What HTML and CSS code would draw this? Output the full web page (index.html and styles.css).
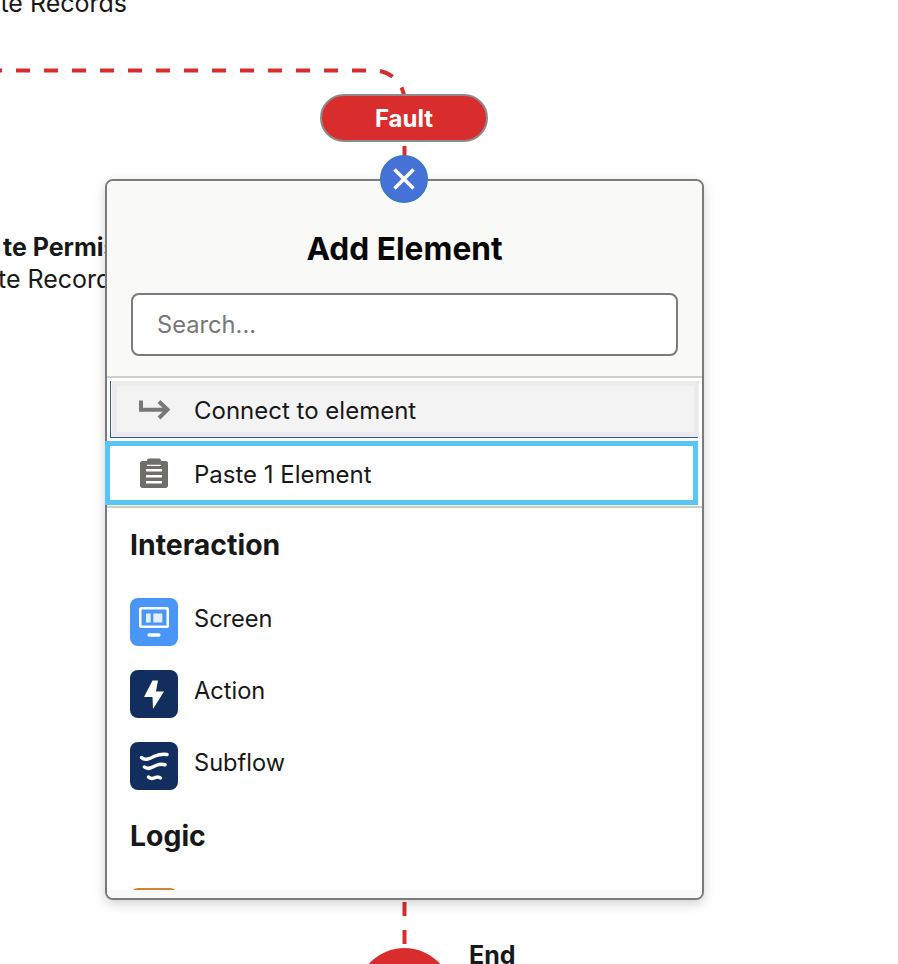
FILE: index.html
```html
<!DOCTYPE html>
<html lang="en">

<head>
    <meta charset="UTF-8">
    <meta name="viewport" content="width=device-width, initial-scale=1.0">
    <title>Add Element</title>
    <link rel="stylesheet" href="styles.css">
</head>

<body>
    <div class="canvas">
        <!-- connectors -->
        <svg class="wires" width="898" height="964" viewBox="0 0 898 964">
            <path class="wire" d="M-12 70.500H374A30 30 0 0 1 404.500 100"/>
            <path class="wire-solid" d="M404.500 146V156"/>
            <path class="wire" d="M404.500 902V948"/>
            <circle class="end-dot" cx="404.500" cy="996" r="48"/>
        </svg>

        <div class="node-text node-top">te Records</div>
        <div class="node-text node-mid"><b class="node-name">te Permissions</b>te Records</div>
        <div class="node-text node-end"><b>End</b></div>

        <div class="fault">Fault</div>

        <div class="panel">
            <div class="panel-head">
                <h2 class="panel-title">Add Element</h2>
                <div class="search">Search...</div>
            </div>

            <div class="quick">
                <div class="row-connect">
                    <div class="row-inner">
                        <span class="row-icon">
                            <svg width="32" height="24" viewBox="0 0 32 24">
                                <path class="arrow" d="M3 3.500V12.700H29M21 4.500L29.500 12.700L21 21"/>
                            </svg>
                        </span>
                        <span class="row-label">Connect to element</span>
                    </div>
                </div>
                <div class="row-paste">
                    <span class="row-icon">
                        <svg width="28" height="30" viewBox="0 0 28 30">
                            <path fill="#706e6b" d="M9 0.500H19C20.500 0.500 21 1.500 21 3H26C27 3 28 4 28 5V27.500C28 28.800 27 30 25.500 30H2.500C1 30 0 28.800 0 27.500V5C0 4 1 3 2 3H7C7 1.500 7.500 0.500 9 0.500Z"/>
                            <path fill="#fff" d="M6 11H22V13.500H6ZM6 17H22V19.500H6ZM6 23H22V25.500H6ZM7 6.800H21V8H7Z"/>
                        </svg>
                    </span>
                    <span class="row-label">Paste 1 Element</span>
                </div>
            </div>

            <div class="list">
                <h3 class="group-title">Interaction</h3>
                <div class="item">
                    <span class="tile tile-screen">
                        <svg width="48" height="48" viewBox="0 0 48 48">
                            <path fill="#fff" fill-rule="evenodd" d="M11 9H37C38 9 39 10 39 11V28C39 29 38 30 37 30H11C10 30 9 29 9 28V11C9 10 10 9 11 9ZM11.500 11.500V27.500H36.500V11.500Z"/>
                            <path fill="#e3efff" d="M16 15.500H20.700V24.500H16ZM23.300 15.500H32.300V24.500H23.300Z"/>
                            <path fill="#fff" d="M19 35.300H29C30 35.300 30.500 36 30.500 37S30 38.700 29 38.700H19C18 38.700 17.500 38 17.500 37S18 35.300 19 35.300Z"/>
                        </svg>
                    </span>
                    <span class="item-label">Screen</span>
                </div>
                <div class="item">
                    <span class="tile tile-dark">
                        <svg width="48" height="48" viewBox="0 0 48 48">
                            <path fill="#fff" d="M22.500 10.500H28L26 21.500H34L23 39L22.500 27H14Z"/>
                        </svg>
                    </span>
                    <span class="item-label">Action</span>
                </div>
                <div class="item">
                    <span class="tile tile-dark">
                        <svg width="48" height="48" viewBox="0 0 48 48">
                            <path class="wave" d="M11.500 15.500C15 19 20 16.500 25 14C29 12.300 33 12 37 12.500"/>
                            <path class="wave" d="M14.500 25C18 28 22 25.500 26 23.500C29 22.300 32 22 35 22.800"/>
                            <path class="wave" d="M18.500 35C21 37.500 24 36.300 26 35.300C27.500 34.600 29 34.800 30.500 36"/>
                        </svg>
                    </span>
                    <span class="item-label">Subflow</span>
                </div>
                <h3 class="group-title group-logic">Logic</h3>
                <div class="item">
                    <span class="tile tile-orange"></span>
                </div>
            </div>
            <div class="panel-foot"></div>
        </div>

        <button class="close-btn" aria-label="Close">
            <svg width="24" height="24" viewBox="0 0 24 24">
                <path class="cross" d="M2.500 2.500L21.500 21.500M21.500 2.500L2.500 21.500"/>
            </svg>
        </button>
    </div>
</body>

</html>
```

FILE: styles.css
```css
html,
body {
    margin: 0;
    height: 100%;
    overflow: hidden;
    background: #fff;
}

body {
    font-family: Inter, "Liberation Sans", sans-serif;
    font-size: 24px;
    color: #181818;
}

.canvas {
    position: relative;
    width: 898px;
    height: 964px;
    overflow: hidden;
}

.wires {
    position: absolute;
    left: 0;
    top: 0;
}

.wire {
    fill: none;
    stroke: #d92d2d;
    stroke-width: 4;
    stroke-dasharray: 14 14;
}

.wire-solid {
    fill: none;
    stroke: #d92d2d;
    stroke-width: 4;
}

.end-dot {
    fill: #d92d2d;
}

/* nodes on the flow canvas */
.node-text {
    position: absolute;
    font-size: 25px;
    line-height: 32px;
    white-space: nowrap;
}

.node-top {
    right: 771px;
    top: -13px;
}

.node-mid {
    left: -2px;
    top: 231px;
}

.node-name {
    display: block;
    margin-left: 5px;
}

.node-end {
    left: 469px;
    top: 939px;
}

.fault {
    position: absolute;
    left: 320px;
    top: 94px;
    width: 168px;
    height: 48px;
    box-sizing: border-box;
    border: 2px solid #8c8c8c;
    border-radius: 24px;
    background: #d92d2d;
    color: #fff;
    font-weight: 700;
    font-size: 24px;
    line-height: 45px;
    text-align: center;
}

.close-btn {
    position: absolute;
    left: 380px;
    top: 155px;
    width: 48px;
    height: 48px;
    padding: 0;
    border: 2px solid #3a76c9;
    border-radius: 50%;
    background: #4672d8;
    display: flex;
    align-items: center;
    justify-content: center;
}

.cross {
    fill: none;
    stroke: #fff;
    stroke-width: 3.5;
}

/* popover */
.panel {
    position: absolute;
    left: 105px;
    top: 179px;
    width: 599px;
    height: 721px;
    box-sizing: border-box;
    border: 2px solid #7b7b7b;
    border-radius: 8px;
    background: #fff;
    box-shadow: 0 4px 12px rgba(0, 0, 0, 0.18);
    display: flex;
    flex-direction: column;
}

.panel-head {
    height: 197px;
    box-sizing: border-box;
    flex: none;
    background: #f9f9f7;
    border-bottom: 2px solid #cfcfcf;
    border-radius: 6px 6px 0 0;
    padding: 0 24px;
}

.panel-title {
    margin: 48px 0 25px;
    font-size: 31.7px;
    line-height: 39px;
    font-weight: 700;
    color: #080707;
    text-align: center;
}

.search {
    width: 547px;
    height: 63px;
    box-sizing: border-box;
    border: 2px solid #7b7b7b;
    border-radius: 8px;
    background: #fff;
    padding-left: 24px;
    font-size: 23.7px;
    line-height: 60px;
    color: #777;
}

.quick {
    flex: none;
    height: 130px;
    box-sizing: border-box;
    padding-top: 3px;
    background: #fff;
    border-bottom: 2px solid #cfcfcf;
    display: flex;
    flex-direction: column;
}

.row-connect {
    margin: 0 4px 0 3px;
    height: 57px;
    box-sizing: border-box;
    padding-left: 1px;
    border-left: 1px solid #2a5ca8;
    border-bottom: 1px solid #2a5ca8;
}

.row-inner {
    height: 56px;
    margin-right: -1px;
    box-sizing: border-box;
    border: 5px solid #ebebeb;
    background: #f3f3f3;
    display: flex;
    align-items: center;
}

.row-paste {
    margin: 3px 4px 0 -2px;
    height: 64px;
    box-sizing: border-box;
    border: 5px solid #5ac6f7;
    display: flex;
    align-items: center;
}

.row-icon {
    width: 84px;
    flex: none;
    box-sizing: border-box;
    padding-left: 30px;
    display: flex;
}

.row-connect .row-icon {
    width: 77px;
    padding-left: 21px;
}

.row-label {
    padding-top: 3px;
}

.arrow {
    fill: none;
    stroke: #787878;
    stroke-width: 4;
}

.list {
    flex: 1;
    min-height: 0;
    padding: 0 23px;
    overflow: hidden;
}

.group-title {
    margin: 20px 0 36px;
    font-size: 28.4px;
    line-height: 34px;
    font-weight: 700;
    color: #181818;
}

.group-logic {
    margin: 29px 0 35px;
}

.item {
    height: 48px;
    margin-bottom: 24px;
    display: flex;
    align-items: center;
    gap: 16px;
}

.item-label {
    font-size: 23.6px;
    padding-bottom: 8px;
}

.tile {
    width: 48px;
    height: 48px;
    flex: none;
    border-radius: 8px;
}

.tile svg {
    display: block;
}

.tile-screen {
    background: #4a96f8;
}

.tile-dark {
    background: #122e5e;
}

.tile-orange {
    background: #d4822e;
}

.wave {
    fill: none;
    stroke: #fff;
    stroke-width: 3.5;
    stroke-linecap: round;
}

.panel-foot {
    flex: none;
    height: 8px;
    background: #f9f9f7;
    border-radius: 0 0 6px 6px;
}
```
